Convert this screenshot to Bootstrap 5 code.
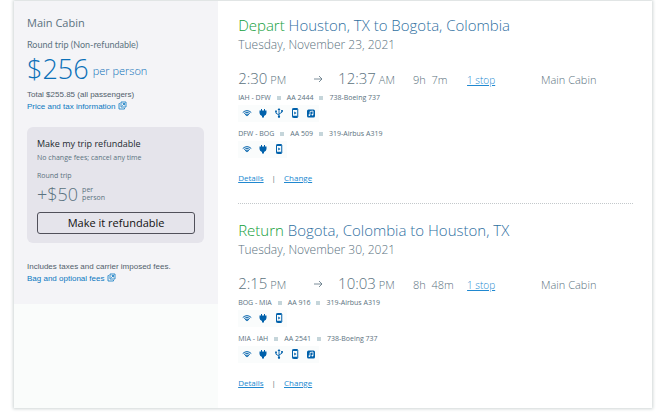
<!DOCTYPE html>
<html lang="en">
<head>
<meta charset="utf-8">
<meta name="viewport" content="width=device-width, initial-scale=1">
<title>Trip summary</title>
<link href="https://cdn.jsdelivr.net/npm/bootstrap@5.3.0/dist/css/bootstrap.min.css" rel="stylesheet">
<style>
body { font-family: "Open Sans", "Noto Sans", sans-serif; font-weight: 300; color: #5b7280; background: #fff; padding: 1px 18px 6px 14px; }
a { color: #2088d0; }
.trip { background: #fff; box-shadow: 0 0 3px 1px #cfd6d6; }
.fare-side { flex: 0 0 32%; background: #fafcfb; }
.fare { background: #f4f4f7; padding: 14px 14px 19px 13px; }
.cabin { font-size: 11px; line-height: 16px; font-weight: 400; margin-bottom: 7px; }
.kind { font-family: Lato, "Open Sans", sans-serif; font-size: 9px; line-height: 14px; font-weight: 400; }
.price { line-height: 28px; color: #0b70b8; margin: 1px 0 4px; }
.price strong { font-size: 27px; font-weight: 300; }
.price span { font-size: 11px; padding-top: 4px; }
.note { font-family: "Liberation Sans", Arial, sans-serif; font-size: 8px; line-height: 12px; font-weight: 400; color: #51606b; }
.note a { color: #0b78c1; }
.upsell { background: #e5e4eb; border-radius: 6px; padding: 10px 9px 9px 10px; margin: 14px 0 18px; }
.upsell h3 { font-size: 9px; line-height: 14px; font-weight: 400; color: #222a30; }
.fine { font-size: 7px; line-height: 14px; font-weight: 400; }
.extra { font-size: 18px; line-height: 20px; margin: 1px 0 8px; }
.extra small { font-size: 7px; line-height: 8px; font-weight: 400; }
.btn-refund { font-size: 11px; line-height: 20px; font-weight: 500; color: #111; border: 1px solid #50505a; border-radius: 3px; padding: 0; }
.slices { padding: 0 19px 0 20px; }
.slice { padding: 14px 0 17px; }
.slice + .slice { padding-top: 16px; border-top: 1px dotted #c3c8cb; }
.slice h2 { font-size: 15px; line-height: 20px; font-weight: 300; color: #2f6f9f; margin: 0; }
.slice h2 span { color: #12a03c; }
.day { font-size: 12px; line-height: 20px; margin-bottom: 13px; }
.times { display: grid; grid-template-columns: 75fr 25fr 75fr 54fr 74fr 92fr; align-items: baseline; line-height: 20px; font-size: 11px; margin-bottom: 2px; white-space: nowrap; }
.times > * { min-width: 0; }
.times b { font-size: 15px; font-weight: 300; }
.times a { font-size: 10px; }
.leg { font-size: 7px; line-height: 12px; gap: 6px; margin-bottom: 1px; font-weight: 400; }
.leg i { width: 4px; height: 4px; background: #c5d5da; }
.perks { width: fit-content; background: #fafcfc; padding: 3px 3px 4px 4px; gap: 6px; color: #0061ab; margin-bottom: 6px; }
.perks svg { width: 10px; height: 10px; }
.acts { font-size: 8px; line-height: 14px; gap: 8px; margin: 13px 0 1px; font-weight: 400; }
.pop { width: 9px; height: 9px; vertical-align: -1px; }
</style>
</head>
<body>
<svg width="0" height="0" class="position-absolute" aria-hidden="true">
  <symbol id="wifi" viewBox="0 0 20 20"><path d="M1.500 9Q10 1.500 18.500 9" fill="none" stroke="currentColor" stroke-width="2"/><path d="M4 11Q10 6 16 11M6 13.500Q10 10.500 14 13.500" fill="none" stroke="currentColor" stroke-width="1.800"/><path d="M6.500 13.500h7L10 16.500z" fill="currentColor"/></symbol>
  <symbol id="plug" viewBox="0 0 20 20"><path d="M6 2h2v3h4V2h2v3h3v5q0 4-5 6v3H8v-3q-5-2-5-6V5h3z" fill="currentColor"/></symbol>
  <symbol id="usb" viewBox="0 0 20 20"><path d="M10 3v14M10 14L4 10.500V7M10 12l6-3.500V6" fill="none" stroke="currentColor" stroke-width="1.800"/><path d="M10 0l3 4H7zM2.300 5h3.400v3.400H2.300zM14.300 4h3.400v3.400h-3.400z" fill="currentColor"/><circle cx="10" cy="17.500" r="2.300" fill="currentColor"/></symbol>
  <symbol id="phone" viewBox="0 0 20 20"><rect x="5" y="1" width="10.500" height="18" rx="1.500" fill="none" stroke="currentColor" stroke-width="2"/><path d="M5 2.500h10M5 17.200h10" stroke="currentColor" stroke-width="3"/><path d="M8.500 7l4.500 3-4.500 3z" fill="currentColor"/></symbol>
  <symbol id="music" viewBox="0 0 20 20"><rect x="2" y="3" width="16" height="16" rx="3" fill="currentColor"/><path d="M8 14V7l6-1v7" fill="none" stroke="#fff" stroke-width="1.600"/><circle cx="6.800" cy="14.200" r="1.800" fill="#fff"/><circle cx="12.800" cy="13.200" r="1.800" fill="#fff"/></symbol>
  <symbol id="popup" viewBox="0 0 18 18"><path d="M6 2h10v10H6zM3.500 5H2v11h11v-2M8.500 9.500l4.500-4.500M9.500 5H13v3.500" fill="none" stroke="currentColor" stroke-width="1.600"/></symbol>
  <symbol id="arrow" viewBox="0 0 10 10"><path d="M1 5h8M6 2l3 3-3 3" fill="none" stroke="currentColor" stroke-width=".8"/></symbol>
</svg>
<main class="trip d-flex">
  <aside class="fare-side">
    <div class="fare">
      <div class="cabin">Main Cabin</div>
      <div class="kind">Round trip (Non-refundable)</div>
      <div class="price d-flex align-items-center gap-1"><strong>$256</strong><span>per person</span></div>
      <div class="note">Total $255.85 (all passengers)</div>
      <div class="note"><a href="#" class="text-decoration-none">Price and tax information <svg class="pop"><use href="#popup"/></svg></a></div>
      <section class="upsell">
        <h3 class="m-0">Make my trip refundable</h3>
        <div class="fine">No change fees; cancel any time</div>
        <div class="fine mt-1">Round trip</div>
        <div class="extra d-flex align-items-center gap-1">+$50 <small>per<br>person</small></div>
        <button type="button" class="btn btn-refund d-block w-100">Make it refundable</button>
      </section>
      <div class="note">Includes taxes and carrier imposed fees.</div>
      <div class="note"><a href="#" class="text-decoration-none">Bag and optional fees <svg class="pop"><use href="#popup"/></svg></a></div>
    </div>
  </aside>
  <div class="slices flex-grow-1">
    <section class="slice">
      <h2><span>Depart</span> Houston, TX to Bogota, Colombia</h2>
      <div class="day">Tuesday, November 23, 2021</div>
      <div class="times"><div><b>2:30</b> PM</div><svg width="10" height="10"><use href="#arrow"/></svg><div><b>12:37</b> AM</div><div>9h&nbsp; 7m</div><div><a href="#">1 stop</a></div><div>Main Cabin</div></div>
      <div class="leg d-flex align-items-center"><span>IAH - DFW</span><i></i><span>AA 2444</span><i></i><span>738-Boeing 737</span></div>
      <div class="perks d-flex"><svg><use href="#wifi"/></svg><svg><use href="#plug"/></svg><svg><use href="#usb"/></svg><svg><use href="#phone"/></svg><svg><use href="#music"/></svg></div>
      <div class="leg d-flex align-items-center"><span>DFW - BOG</span><i></i><span>AA 509</span><i></i><span>319-Airbus A319</span></div>
      <div class="perks d-flex"><svg><use href="#wifi"/></svg><svg><use href="#plug"/></svg><svg><use href="#phone"/></svg></div>
      <div class="acts d-flex"><a href="#">Details</a><span>|</span><a href="#">Change</a></div>
    </section>
    <section class="slice">
      <h2><span>Return</span> Bogota, Colombia to Houston, TX</h2>
      <div class="day">Tuesday, November 30, 2021</div>
      <div class="times"><div><b>2:15</b> PM</div><svg width="10" height="10"><use href="#arrow"/></svg><div><b>10:03</b> PM</div><div>8h&nbsp; 48m</div><div><a href="#">1 stop</a></div><div>Main Cabin</div></div>
      <div class="leg d-flex align-items-center"><span>BOG - MIA</span><i></i><span>AA 916</span><i></i><span>319-Airbus A319</span></div>
      <div class="perks d-flex"><svg><use href="#wifi"/></svg><svg><use href="#plug"/></svg><svg><use href="#phone"/></svg></div>
      <div class="leg d-flex align-items-center"><span>MIA - IAH</span><i></i><span>AA 2541</span><i></i><span>738-Boeing 737</span></div>
      <div class="perks d-flex"><svg><use href="#wifi"/></svg><svg><use href="#plug"/></svg><svg><use href="#usb"/></svg><svg><use href="#phone"/></svg><svg><use href="#music"/></svg></div>
      <div class="acts d-flex"><a href="#">Details</a><span>|</span><a href="#">Change</a></div>
    </section>
  </div>
</main>
<script src="https://cdn.jsdelivr.net/npm/bootstrap@5.3.0/dist/js/bootstrap.bundle.min.js"></script>
</body>
</html>
